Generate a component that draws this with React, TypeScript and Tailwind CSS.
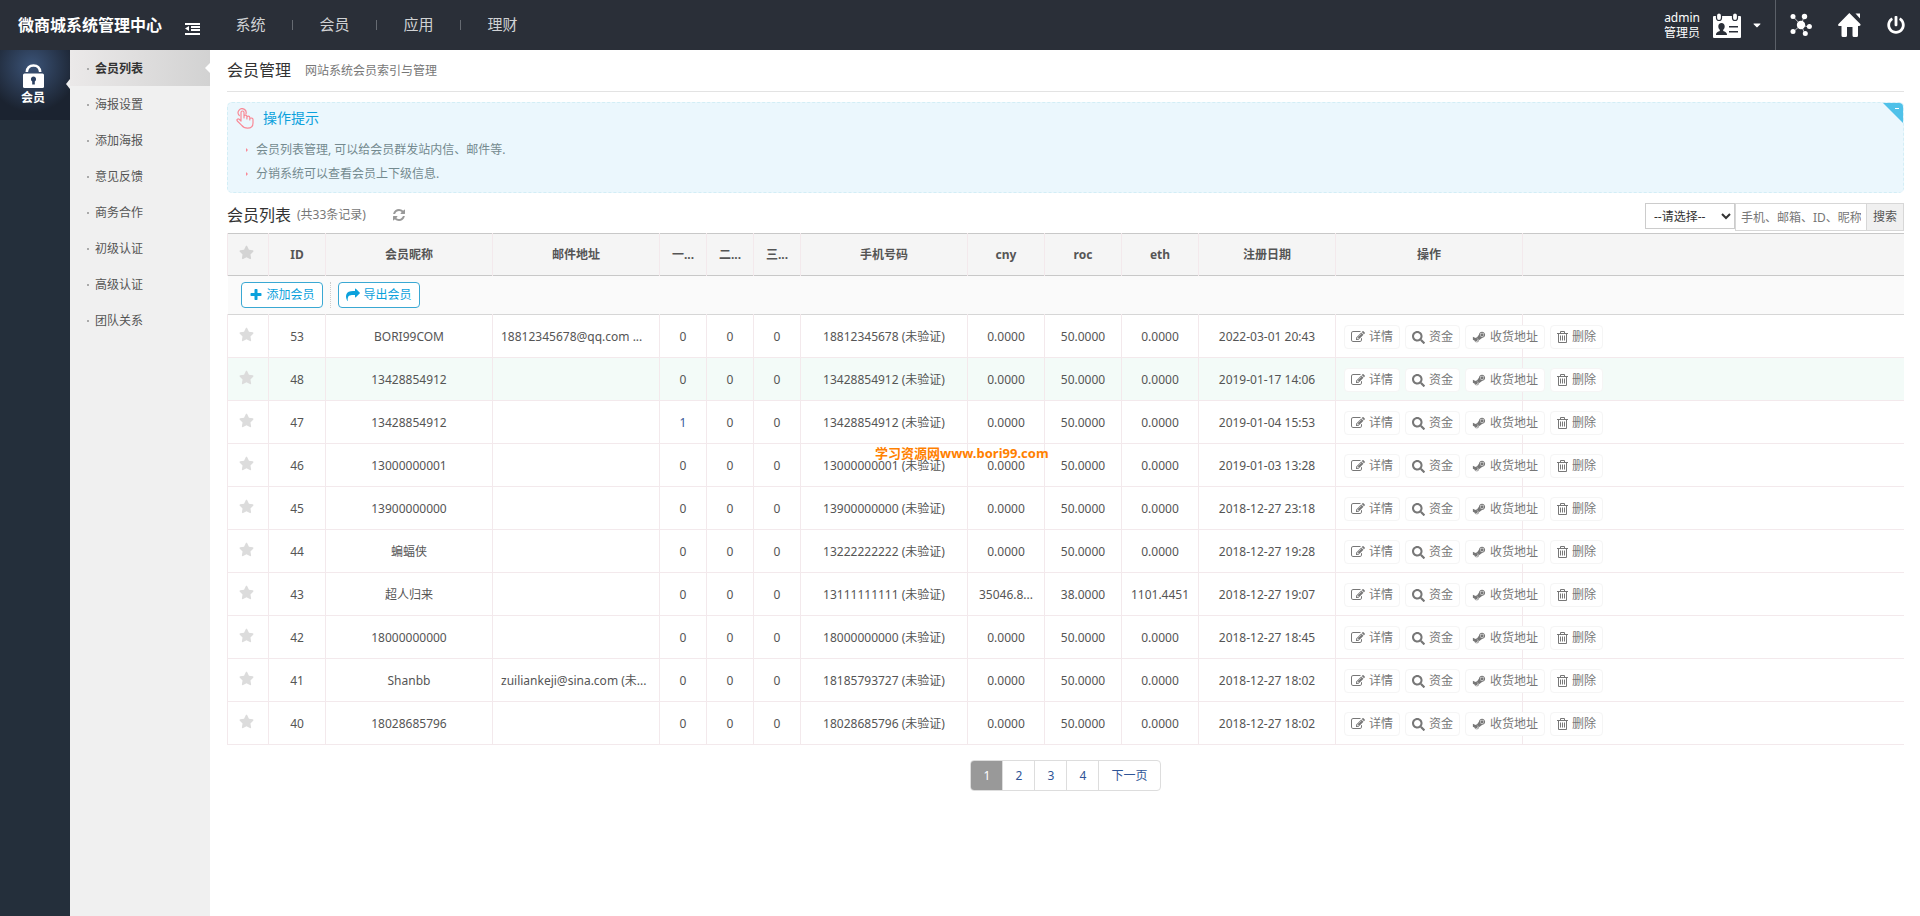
import * as React from 'react';
import { FaCaretDown, FaPowerOff, FaSearch, FaStar, FaSteamSymbol } from 'react-icons/fa';

interface Member {
  id: number;
  name: string;
  email: string;
  level: number;
  phone: string;
  cny: string;
  roc: string;
  eth: string;
  date: string;
}

const topNav = ['系统', '会员', '应用', '理财'];
const subMenu = ['会员列表', '海报设置', '添加海报', '意见反馈', '商务合作', '初级认证', '高级认证', '团队关系'];

const columns = [
  { title: 'ID', width: 57 },
  { title: '会员昵称', width: 167 },
  { title: '邮件地址', width: 167 },
  { title: '一...', width: 47 },
  { title: '二...', width: 47 },
  { title: '三...', width: 47 },
  { title: '手机号码', width: 167 },
  { title: 'cny', width: 77 },
  { title: 'roc', width: 77 },
  { title: 'eth', width: 77 },
  { title: '注册日期', width: 137 },
  { title: '操作', width: 187 },
];

const members: Member[] = [
  { id: 53, name: 'BORI99COM', email: '18812345678@qq.com ...', level: 0, phone: '18812345678', cny: '0.0000', roc: '50.0000', eth: '0.0000', date: '2022-03-01 20:43' },
  { id: 48, name: '13428854912', email: '', level: 0, phone: '13428854912', cny: '0.0000', roc: '50.0000', eth: '0.0000', date: '2019-01-17 14:06' },
  { id: 47, name: '13428854912', email: '', level: 1, phone: '13428854912', cny: '0.0000', roc: '50.0000', eth: '0.0000', date: '2019-01-04 15:53' },
  { id: 46, name: '13000000001', email: '', level: 0, phone: '13000000001', cny: '0.0000', roc: '50.0000', eth: '0.0000', date: '2019-01-03 13:28' },
  { id: 45, name: '13900000000', email: '', level: 0, phone: '13900000000', cny: '0.0000', roc: '50.0000', eth: '0.0000', date: '2018-12-27 23:18' },
  { id: 44, name: '蝙蝠侠', email: '', level: 0, phone: '13222222222', cny: '0.0000', roc: '50.0000', eth: '0.0000', date: '2018-12-27 19:28' },
  { id: 43, name: '超人归来', email: '', level: 0, phone: '13111111111', cny: '35046.8...', roc: '38.0000', eth: '1101.4451', date: '2018-12-27 19:07' },
  { id: 42, name: '18000000000', email: '', level: 0, phone: '18000000000', cny: '0.0000', roc: '50.0000', eth: '0.0000', date: '2018-12-27 18:45' },
  { id: 41, name: 'Shanbb', email: 'zuiliankeji@sina.com (未...', level: 0, phone: '18185793727', cny: '0.0000', roc: '50.0000', eth: '0.0000', date: '2018-12-27 18:02' },
  { id: 40, name: '18028685796', email: '', level: 0, phone: '18028685796', cny: '0.0000', roc: '50.0000', eth: '0.0000', date: '2018-12-27 18:02' },
];

const iconPaths = {
  edit: 'M888 1184l116-116-152-152-116 116v56h96v96h56zm440-720q-16-16-33 1l-350 350q-17 17-1 33t33-1l350-350q17-17 1-33zm80 594v190q0 119-84.5 203.5t-203.5 84.5h-832q-119 0-203.5-84.5t-84.5-203.5v-832q0-119 84.5-203.5t203.5-84.5h832q63 0 117 25 15 7 18 23 3 17-9 29l-49 49q-14 14-32 8-23-6-45-6h-832q-66 0-113 47t-47 113v832q0 66 47 113t113 47h832q66 0 113-47t47-113v-126q0-13 9-22l64-64q15-15 35-7t20 29zm-96-738l288 288-672 672h-288v-288zm444 132l-92 92-288-288 92-92q28-28 68-28t68 28l152 152q28 28 28 68t-28 68z',
  refresh:
    'M1639 1056q0 5-1 7-64 268-268 434.5t-478 166.5q-146 0-282.5-55t-243.5-157l-129 129q-19 19-45 19t-45-19-19-45v-448q0-26 19-45t45-19h448q26 0 45 19t19 45-19 45l-137 137q71 66 161 102t187 36q134 0 250-65t186-179q11-17 53-117 8-23 30-23h192q13 0 22.5 9.5t9.5 22.5zm25-800v448q0 26-19 45t-45 19h-448q-26 0-45-19t-19-45 19-45l138-138q-148-137-349-137-134 0-250 65t-186 179q-11 17-53 117-8 23-30 23h-199q-13 0-22.5-9.5t-9.5-22.5v-7q65-268 270-434.5t480-166.5q146 0 284 55.5t245 156.5l130-129q19-19 45-19t45 19 19 45z',
  plus: 'M1600 736v192q0 40-28 68t-68 28h-416v416q0 40-28 68t-68 28h-192q-40 0-68-28t-28-68v-416h-416q-40 0-68-28t-28-68v-192q0-40 28-68t68-28h416v-416q0-40 28-68t68-28h192q40 0 68 28t28 68v416h416q40 0 68 28t28 68z',
  share:
    'M1792 640q0 26-19 45l-512 512q-19 19-45 19t-45-19-19-45v-256h-224q-98 0-175.5 6t-154 21.5-133 42.5-105.5 69.5-80 101-48.5 138.5-17.5 181q0 55 5 123 0 6 2.500 23.500t2.500 26.500q0 15-8.500 25t-23.500 10q-16 0-28-17-7-9-13-22t-13.500-30-10.500-24q-127-285-127-451 0-199 53-333 162-403 875-403h224v-256q0-26 19-45t45-19 45 19l512 512q19 19 19 45z',
};

function Icon({ name, size }: { name: keyof typeof iconPaths; size: number }) {
  return (
    <svg width={size} height={size} viewBox="0 0 1792 1792" fill="currentColor">
      <path d={iconPaths[name]} />
    </svg>
  );
}

function OutdentIcon() {
  return (
    <svg width="15" height="12" viewBox="0 0 15 12" fill="#fff">
      <path d="M0 0h15v2H0zM6 3h9v2H6zM6 6h9v2H6zM0 10h15v2H0zM4 3v5L0 5.500z" />
    </svg>
  );
}

function CardIcon() {
  return (
    <svg width="28" height="25" viewBox="0 0 28 25">
      <path d="M1 3h26a1 1 0 0 1 1 1v20a1 1 0 0 1-1 1H1a1 1 0 0 1-1-1V4a1 1 0 0 1 1-1z" fill="#fff" />
      <g fill="#fff" stroke="#2a2f38" strokeWidth="1.200">
        <rect x="3.500" y="0" width="5" height="7.500" rx="2.500" />
        <rect x="19.500" y="0" width="5" height="7.500" rx="2.500" />
      </g>
      <path
        d="M8.500 10c2 0 3.200 1.400 3.200 3.400 0 1.500-.7 2.600-1.500 3.300v1.300c1.600.5 3.800 1.200 3.800 4H3c0-2.800 2.200-3.500 3.800-4v-1.300c-.8-.7-1.500-1.800-1.500-3.300 0-2 1.200-3.400 3.200-3.400z"
        fill="#2a2f38"
      />
      <path d="M16 13h9v1.500h-9zM16 18h9v1.500h-9z" fill="#2a2f38" />
    </svg>
  );
}

function NodesIcon() {
  return (
    <svg width="22" height="24" viewBox="0 0 22 24" fill="#fff" stroke="#fff">
      <path d="M3 3.500l8 8.500 3-8M11 12l8 2M11 12l-8 7M11 12l4 9" fill="none" strokeWidth="0.700" />
      <g stroke="none">
        <circle cx="11" cy="12" r="4.200" />
        <circle cx="3" cy="3.500" r="2.500" />
        <circle cx="14.500" cy="3.500" r="2.700" />
        <circle cx="19.400" cy="13.500" r="2.500" />
        <circle cx="3" cy="18.500" r="2.500" />
        <circle cx="15.300" cy="20.500" r="2.500" />
      </g>
    </svg>
  );
}

function HomeIcon() {
  return (
    <svg width="23" height="24" viewBox="0 0 23 24" fill="#fff">
      <path d="M11.300 0l11 11c.7 1 0 2-1 2H20v9.500a1.500 1.500 0 0 1-1.500 1.500h-2.500a1.500 1.500 0 0 1-1.500-1.500V14H9v8.500A1.500 1.500 0 0 1 7.500 24H5A1.500 1.500 0 0 1 3.500 22.500V13H1.500c-1.300 0-1.800-1-1-2z" />
      <path d="M17.500.500h4.500v5z" />
    </svg>
  );
}

function LockIcon() {
  return (
    <svg width="21" height="24" viewBox="0 0 21 24">
      <path d="M3.800 8C4.200 3.700 6.800 1.500 10.500 1.500S16.800 3.700 17.200 8" fill="none" stroke="#fff" strokeWidth="2.600" />
      <rect x="0" y="9.500" width="21" height="14.500" rx="1.500" fill="#fff" />
      <path d="M10.500 12.500a2.700 2.700 0 0 1 1.300 5V20.500H9.200v-3a2.700 2.700 0 0 1 1.300-5z" fill="#2b4061" />
    </svg>
  );
}

function TapIcon() {
  return (
    <svg width="18" height="21" viewBox="0 0 18 21" fill="none" stroke="#f98a97" strokeWidth="1.200" strokeLinejoin="round" strokeLinecap="round">
      <path d="M5 13V4.500a1.500 1.500 0 0 1 3 0V10M8 10V8.500a1.400 1.400 0 0 1 2.900 0V11M10.900 9.500a1.400 1.400 0 0 1 2.900 0V12M13.800 10.500c1.200-1 3.200-.4 3.200 1V15c0 3.300-2.400 5.200-5.500 5.200-3 0-4.500-1-6-3L1.300 13c-1-1.500.6-2.700 1.900-1.700L5 13" />
      <path d="M3.300 7.500a4 4 0 1 1 6.600-1.500" />
    </svg>
  );
}

function TrashIcon() {
  return (
    <svg width="11" height="12" viewBox="0 0 11 12" fill="none" stroke="#777">
      <path d="M0 2.500h11M3.500 2.500v-2h4v2M1.500 2.500v9h8v-9M3.500 4.500v5M5.500 4.500v5M7.500 4.500v5" />
    </svg>
  );
}

function ActionButton({ icon, children }: { icon: React.ReactNode; children: React.ReactNode }) {
  return (
    <button className="flex h-6 items-center gap-1 rounded-sm border border-[#f5f5f5] bg-white px-1.5 text-[#777]">
      {icon}
      {children}
    </button>
  );
}

function Header() {
  return (
    <header className="flex h-[50px] items-center bg-[#2a2f38] text-white">
      <h1 className="w-[185px] pl-[18px] text-base font-bold">微商城系统管理中心</h1>
      <button aria-label="收起菜单" className="mt-2">
        <OutdentIcon />
      </button>
      <nav className="ml-[9px] flex text-[15px] text-[#d0d2d4]">
        {topNav.map((item, i) => (
          <div key={item} className="flex w-[84px] items-center">
            <a href="#" className="w-[83px] pb-0.5 text-center">
              {item}
            </a>
            {i < topNav.length - 1 && <span className="h-2.5 w-px bg-[#666b72]" />}
          </div>
        ))}
      </nav>
      <div className="ml-auto flex h-full items-center">
        <div className="text-right text-xs leading-[15px]">
          <p>admin</p>
          <p>管理员</p>
        </div>
        <button aria-label="账户" className="ml-[13px] flex items-center gap-2.5">
          <CardIcon />
          <FaCaretDown size={12} />
        </button>
        <span className="ml-3 h-full w-px bg-[#5b6068]" />
        <div className="flex items-center gap-[26px] pr-[15px] pl-[14px]">
          <button aria-label="站点">
            <NodesIcon />
          </button>
          <button aria-label="首页">
            <HomeIcon />
          </button>
          <button aria-label="退出">
            <FaPowerOff size={18} />
          </button>
        </div>
      </div>
    </header>
  );
}

function Sidebar() {
  return (
    <>
      <aside className="w-[70px] shrink-0 bg-[#242f3b]">
        <a
          href="#"
          className="relative flex h-[70px] flex-col items-center gap-0.5 bg-[radial-gradient(circle_at_32px_16px,#3b5377,#1b2330_46px)] pt-3.5 pr-1 text-xs font-bold text-white"
        >
          <LockIcon />
          <span>会员</span>
          <span className="absolute top-[29px] right-0 border-y-[5px] border-r-[4px] border-y-transparent border-r-[#f0f0f0]" />
        </a>
      </aside>
      <nav className="w-[140px] shrink-0 bg-[#f0f0f0] text-xs text-[#555]">
        {subMenu.map((item, i) => (
          <a
            key={item}
            href="#"
            className={
              i === 0
                ? 'relative flex h-9 items-center gap-1.5 bg-linear-to-r from-[#ebe9e9] to-[#d2d2d2] pt-0.5 pl-[17px] font-bold text-[#333]'
                : 'flex h-9 items-center gap-1.5 pt-0.5 pl-[17px]'
            }
          >
            <span className="size-0.5 bg-[#aaa]" />
            {item}
            {i === 0 && (
              <span className="absolute top-[13px] right-0 border-y-[5px] border-r-[5px] border-y-transparent border-r-white" />
            )}
          </a>
        ))}
      </nav>
    </>
  );
}

function Tips() {
  return (
    <section className="relative mt-2.5 overflow-hidden rounded-[5px] border border-dashed border-[#d3eef6] bg-[#ebf7fd] px-2 pt-[3px] pb-1.5">
      <div className="flex h-6 items-center gap-[9px] text-sm text-[#0ba1dc]">
        <TapIcon />
        <h2>操作提示</h2>
      </div>
      <ul className="mt-2 text-xs leading-6 text-[#748a8f]">
        {['会员列表管理, 可以给会员群发站内信、邮件等.', '分销系统可以查看会员上下级信息.'].map((tip) => (
          <li key={tip} className="flex items-center gap-2 pl-[10px]">
            <span className="border-y-2 border-l-2 border-y-transparent border-l-[#f98a97]" />
            {tip}
          </li>
        ))}
      </ul>
      <button
        aria-label="收起提示"
        className="absolute top-0 right-0 h-5 w-5 bg-[#4fc1e9] [clip-path:polygon(0_0,100%_0,100%_100%)]"
      >
        <span className="absolute top-[5px] right-1 h-px w-1 bg-white" />
      </button>
    </section>
  );
}

function MemberTable() {
  return (
    <table className="w-full table-fixed border-collapse text-xs text-[#555]">
      <colgroup>
        <col style={{ width: 41 }} />
        {columns.map((col) => (
          <col key={col.title} style={{ width: col.width }} />
        ))}
        <col />
      </colgroup>
      <thead>
        <tr className="h-[42px] border-y border-[#c8c8c8] bg-[#f5f5f5] [&>th]:border-r [&>th]:border-r-[#f3e9ec]">
          <th className="border-l border-l-[#f3e9ec]">
            <div className="flex justify-center pr-1 pb-1">
              <FaStar size={15} className="text-[#d4d4d4]" />
            </div>
          </th>
          {columns.map((col) => (
            <th key={col.title} className="font-bold">
              {col.title}
            </th>
          ))}
          <th className="border-r-0!" />
        </tr>
        <tr className="h-[39px] border-b border-[#d6d6d6] bg-[#fafafa]">
          <td colSpan={14}>
            <div className="flex h-[26px] items-center pl-[13px]">
              <button className="flex h-full items-center gap-1 rounded border border-[#3aa8d3] bg-white px-[7px] text-[#0ba1dc]">
                <Icon name="plus" size={14} />
                添加会员
              </button>
              <span className="mx-[7px] h-full border-l border-dotted border-[#ccc]" />
              <button className="flex h-full items-center gap-1 rounded border border-[#3aa8d3] bg-white px-[7px] text-[#0ba1dc]">
                <Icon name="share" size={14} />
                导出会员
              </button>
            </div>
          </td>
        </tr>
      </thead>
      <tbody className="text-center">
        {members.map((m, i) => (
          <tr
            key={m.id}
            className={
              i === 1
                ? 'h-[43px] border-b border-[#f3e9ec] bg-[#f3fbf8] [&>td]:border-r [&>td]:border-[#f3e9ec] [&>td]:pt-0.5'
                : 'h-[43px] border-b border-[#f3e9ec] [&>td]:border-r [&>td]:border-[#f3e9ec] [&>td]:pt-0.5'
            }
          >
            <td className="border-l">
              <div className="flex justify-center pr-1 pb-1.5">
                <FaStar size={15} className="text-[#dcdcdc]" />
              </div>
            </td>
            <td>{m.id}</td>
            <td>{m.name}</td>
            <td className="pl-2 text-left whitespace-nowrap">{m.email}</td>
            <td className={m.level ? 'text-[#3b5999]' : ''}>{m.level}</td>
            <td>0</td>
            <td>0</td>
            <td>{m.phone} (未验证)</td>
            <td>{m.cny}</td>
            <td>{m.roc}</td>
            <td>{m.eth}</td>
            <td>{m.date}</td>
            <td>
              <div className="relative flex w-max gap-[5px] pl-2">
                <ActionButton icon={<Icon name="edit" size={14} />}>详情</ActionButton>
                <ActionButton icon={<FaSearch size={13} />}>资金</ActionButton>
                <ActionButton icon={<FaSteamSymbol size={14} />}>收货地址</ActionButton>
                <ActionButton icon={<TrashIcon />}>删除</ActionButton>
              </div>
            </td>
            <td className="border-r-0!" />
          </tr>
        ))}
      </tbody>
    </table>
  );
}

function Pagination() {
  return (
    <nav className="mt-[15px] flex justify-center text-xs text-[#2f5597]">
      <div className="flex h-[31px] divide-x divide-[#ddd] overflow-hidden rounded border border-[#ddd]">
        <a href="#" className="flex w-8 items-center justify-center bg-[#999] text-white">
          1
        </a>
        {['2', '3', '4'].map((page) => (
          <a key={page} href="#" className="flex w-8 items-center justify-center">
            {page}
          </a>
        ))}
        <a href="#" className="flex items-center px-3">
          下一页
        </a>
      </div>
    </nav>
  );
}

function App() {
  return (
    <div className="flex min-h-screen flex-col bg-white font-['Noto_Sans','Noto_Sans_CJK_SC',sans-serif]">
      <Header />
      <div className="flex flex-1">
        <Sidebar />
        <main className="relative min-w-0 flex-1 pr-4 pl-[17px]">
          <div className="flex h-[42px] items-center gap-3.5 border-b border-[#e3e3e3]">
            <h2 className="pb-0.5 text-base text-[#333]">会员管理</h2>
            <p className="text-xs text-[#777]">网站系统会员索引与管理</p>
          </div>
          <Tips />
          <div className="flex h-10 items-center">
            <h3 className="mt-1 text-base text-[#333]">会员列表</h3>
            <p className="mt-1 ml-1.5 text-xs text-[#777]">(共33条记录)</p>
            <button aria-label="刷新" className="mt-1 ml-[26px] text-[#999]">
              <Icon name="refresh" size={14} />
            </button>
            <div className="mt-2 ml-auto flex items-start text-xs text-[#333]">
              <select aria-label="查询条件" className="h-[26px] w-[90px] border border-[#ccc] bg-white pl-1">
                <option>--请选择--</option>
              </select>
              <input
                type="text"
                aria-label="关键词"
                placeholder="手机、邮箱、ID、昵称"
                className="h-7 w-[132px] border border-[#d7d7d7] px-[5px] placeholder:text-[#777]"
              />
              <button className="h-7 border border-l-0 border-[#d7d7d7] bg-[#f0f0f0] px-1.5 text-[#555]">搜索</button>
            </div>
          </div>
          <MemberTable />
          <Pagination />
          <p className="absolute top-[394px] left-[665px] text-[13px] font-bold text-[#ff8000]">学习资源网www.bori99.com</p>
        </main>
      </div>
    </div>
  );
}

export default App;
